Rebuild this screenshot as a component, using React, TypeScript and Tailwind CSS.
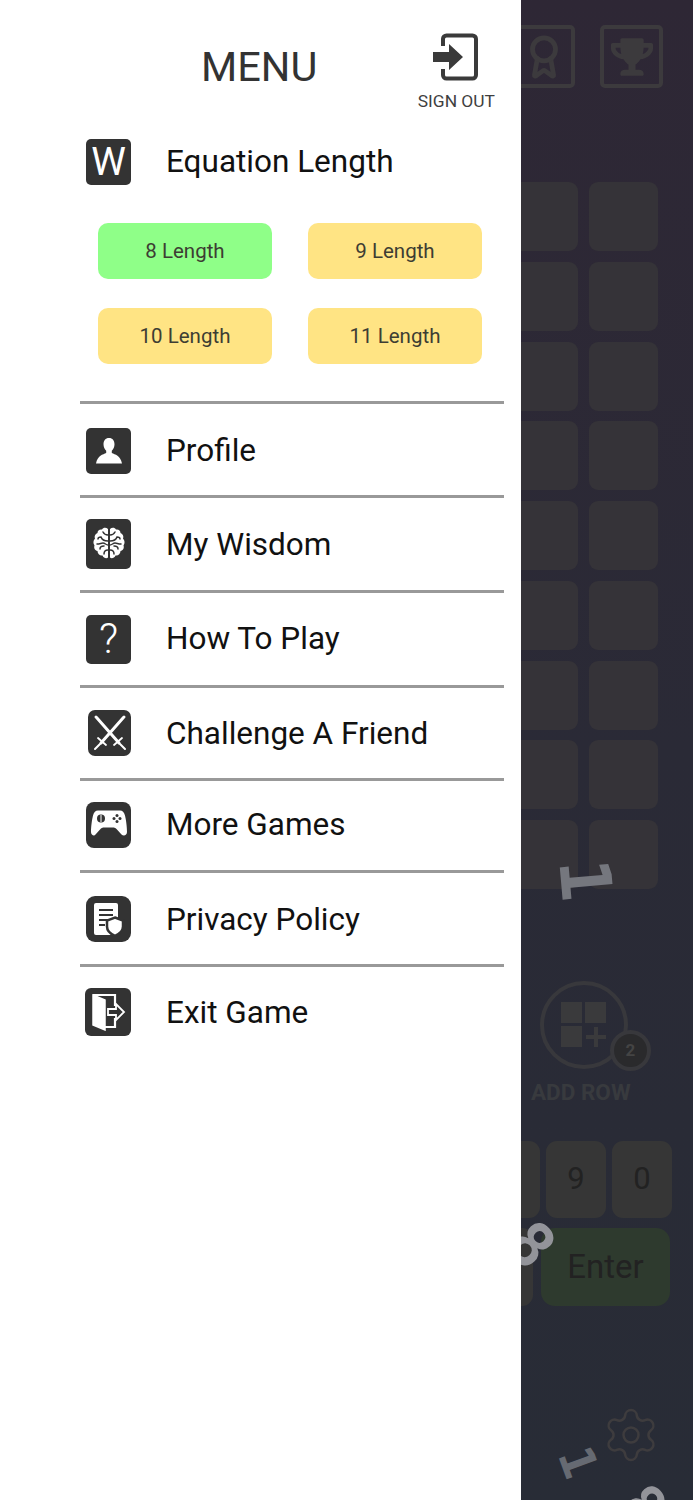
import React from "react";
import { FaTrophy } from "react-icons/fa";
import { Award, Settings } from "lucide-react";

const font = { fontFamily: "Roboto, sans-serif" };

function SignOutIcon() {
  return (
    <svg width="46" height="48" viewBox="0 0 46 48" fill="none">
      <path d="M10 13V6a3.500 3.500 0 0 1 3.500-3.500h26A3.500 3.500 0 0 1 43 6v36a3.500 3.500 0 0 1-3.500 3.500h-26A3.500 3.500 0 0 1 10 42v-6" stroke="#3a3a3a" strokeWidth="4" />
      <path d="M0 19h16v-8l14 13-14 13v-8H0z" fill="#3a3a3a" />
    </svg>
  );
}

function IconBox({ children, className = "h-[46px] w-[45px] rounded-[5px]" }: { children: React.ReactNode; className?: string }) {
  return (
    <div className={`flex shrink-0 items-center justify-center bg-[#333333] text-white ${className}`}>
      {children}
    </div>
  );
}

function ProfileIcon() {
  return (
    <svg width="30" height="30" viewBox="0 0 30 30" fill="#fff">
      <path d="M15 2c-3.600 0-5.500 2.600-5.500 6.200 0 2.800 1.200 5.300 2.700 6.500v2.300C9 18.500 3.500 19.500 2 27.500h26c-1.500-8-7-9-10.200-10.500v-2.300c1.500-1.200 2.700-3.700 2.700-6.500C20.500 4.600 18.600 2 15 2z" />
    </svg>
  );
}

function BrainIcon() {
  return (
    <svg width="34" height="36" viewBox="0 0 34 36" fill="none">
      <path d="M16 3c-2-2-5-1.500-6 .5-2.500-.5-4.500 1-4.500 3.500C3 8 2 10.500 3 12.500 1 14.500 1 17.500 2.500 19.500 1.500 22 3 24.500 5.500 25c0 3 2.500 5 5 4.500 1 2.500 4 3.500 5.500 2z" fill="#fff" />
      <path d="M18 3c2-2 5-1.500 6 .5 2.500-.5 4.500 1 4.500 3.500C31 8 32 10.500 31 12.500c2 2 2 5 .5 7 1 2.500-.5 5-3 5.500 0 3-2.500 5-5 4.500-1 2.500-4 3.500-5.500 2z" fill="#fff" />
      <path d="M16 9c-3 0-4-1-5-3M16 15c-3 0-6-1-7-4-2 0-3 1-3 2M5 18c3 0 4-1 6-1 2 0 3 2 5 2M8 23c0-2 2-3 4-3M12 28c0-3 1-4 4-4" stroke="#333" strokeWidth="1.500" strokeLinecap="round" />
      <path d="M18 9c3 0 4-1 5-3M18 15c3 0 6-1 7-4 2 0 3 1 3 2M29 18c-3 0-4-1-6-1-2 0-3 2-5 2M26 23c0-2-2-3-4-3M22 28c0-3-1-4-4-4" stroke="#333" strokeWidth="1.500" strokeLinecap="round" />
    </svg>
  );
}

function SwordsIcon() {
  return (
    <svg width="38" height="38" viewBox="0 0 38 38" fill="none" stroke="#fff" strokeLinecap="round">
      <path d="M5 3l1 1 22 25" strokeWidth="3" />
      <path d="M33 3l-1 1L10 29" strokeWidth="3" />
      <path d="M23 31l8-7M15 31l-8-7" strokeWidth="1.800" />
      <path d="M29 30l5 5M9 30l-5 5" strokeWidth="2" />
    </svg>
  );
}

function GamepadIcon() {
  return (
    <svg width="38" height="32" viewBox="0 0 38 32">
      <path d="M8 1.500h22c2.500 0 4 1.500 5 5 1 4 2 11 2 16.500 0 3.500-3.500 4.500-5.500 2.500l-5-5.500c-1-1-2-1.500-3.500-1.500h-9c-1.500 0-2.500.5-3.500 1.500l-5 5.500C4.500 27.500 1 26.500 1 23c0-5.500 1-12.500 2-16.500 1-3.500 2.500-5 5-5z" fill="#fff" />
      <circle cx="11" cy="9.500" r="4" fill="#333" />
      <path d="M11 6v7" stroke="#fff" strokeWidth="1" />
      <circle cx="27" cy="6.500" r="1.500" fill="#333" />
      <circle cx="27" cy="12.500" r="1.500" fill="#333" />
      <circle cx="24" cy="9.500" r="1.500" fill="#333" />
      <circle cx="30" cy="9.500" r="1.500" fill="#333" />
    </svg>
  );
}

function PolicyIcon() {
  return (
    <svg width="34" height="36" viewBox="0 0 34 36">
      <path d="M4 2h20a2 2 0 0 1 2 2v28a2 2 0 0 1-2 2H4a2 2 0 0 1-2-2V4a2 2 0 0 1 2-2z" fill="#fff" />
      <path d="M7 9h14M7 14h14M7 19h9M7 24h6" stroke="#333" strokeWidth="2" />
      <path d="M23 16.500l8 3v6c0 4.500-3.500 7.500-8 9.500-4.500-2-8-5-8-9.500v-6z" fill="#fff" stroke="#333" strokeWidth="2.500" />
    </svg>
  );
}

function ExitIcon() {
  return (
    <svg width="36" height="38" viewBox="0 0 36 38" fill="none">
      <path d="M3 2h22v11M25 25v9H14" stroke="#fff" strokeWidth="2.200" />
      <path d="M3 2l12 5v30L3 32z" fill="#fff" stroke="#fff" strokeWidth="1.500" />
      <path d="M18 16h8v-5l8 8-8 8v-5h-8z" stroke="#fff" strokeWidth="1.800" />
    </svg>
  );
}

const rows: { label: string; icon: React.ReactNode; h: string; box?: string; text: string }[] = [
  { label: "Profile", icon: <ProfileIcon />, h: "h-[94px]", box: "mt-[2px] h-[46px] w-[45px] rounded-[5px]", text: "pt-[2px]" },
  { label: "My Wisdom", icon: <BrainIcon />, h: "h-[95px]", box: "h-[50px] w-[45px] rounded-[5px]", text: "pt-[2px]" },
  { label: "How To Play", icon: <span className="text-[42px] font-light leading-none">?</span>, h: "h-[95px]", box: "h-[49px] w-[45px] rounded-[5px]", text: "" },
  { label: "Challenge A Friend", icon: <SwordsIcon />, h: "h-[93px]", box: "ml-[2px] h-[46px] w-[43px] rounded-[7px]", text: "pt-[2px] ml-[-2px]" },
  { label: "More Games", icon: <GamepadIcon />, h: "h-[92px]", box: "mb-[2px] h-[46px] w-[45px] rounded-[8px]", text: "pb-[2px]" },
  { label: "Privacy Policy", icon: <PolicyIcon />, h: "h-[94px]", box: "h-[46px] w-[45px] rounded-[9px]", text: "pt-[2px]" },
  { label: "Exit Game", icon: <ExitIcon />, h: "h-[92px]", box: "ml-[-1px] h-[48px] w-[46px] rounded-[6px]", text: "pt-[2px]" },
];

function LengthBtn({ label, active }: { label: string; active?: boolean }) {
  return (
    <div className={`flex h-[56px] w-[174px] items-center justify-center rounded-[10px] text-[20.500px] text-[#3d3d33] ${active ? "bg-[#8fff88]" : "bg-[#ffe484]"}`}>
      {label}
    </div>
  );
}

function Tile() {
  return <div className="h-[69px] w-[69px] rounded-[9px] bg-[#353338]" />;
}

function Key({ label }: { label: string }) {
  return (
    <div className="flex h-[77px] w-[60px] shrink-0 items-center justify-center rounded-[11px] bg-[#363636] text-[31px] text-[#222]">
      {label}
    </div>
  );
}

const digit = "absolute font-bold leading-none [font-family:'DejaVu_Sans_Mono',monospace]";

function Game() {
  return (
    <div className="relative h-full flex-1 overflow-hidden bg-gradient-to-b from-[#2e2735] via-[#2a2a36] to-[#282c36]">
      <div className="ml-[-9px] mt-[25px] flex gap-[25px]">
        <div className="flex h-[63px] w-[63px] shrink-0 items-center justify-center rounded-[5px] border-[4px] border-[#3c3a3d] text-[#3c3a3d]">
          <Award size={46} strokeWidth={2.500} />
        </div>
        <div className="flex h-[63px] w-[63px] shrink-0 items-center justify-center rounded-[5px] border-[4px] border-[#3c3a3d] text-[#3c3a3d]">
          <FaTrophy size={42} />
        </div>
      </div>
      <div className="ml-[-12px] mt-[94px] grid grid-cols-[69px_69px] gap-x-[11px] gap-y-[10.750px]">
        {Array.from({ length: 18 }).map((_, i) => (
          <Tile key={i} />
        ))}
      </div>
      <div className="ml-[19px] mt-[92px] flex w-[120px] flex-col items-start">
        <div className="relative h-[88px] w-[88px] rounded-full border-[4px] border-[#38383c]">
          <div className="absolute left-[17px] top-[17px] grid grid-cols-2 gap-[3px]">
            <div className="h-[21px] w-[21px] bg-[#3a3a3c]" />
            <div className="h-[21px] w-[21px] bg-[#3a3a3c]" />
            <div className="h-[21px] w-[21px] bg-[#3a3a3c]" />
            <div className="relative h-[21px] w-[21px]">
              <div className="absolute left-[9px] top-[1px] h-[20px] w-[4px] bg-[#3a3a3c]" />
              <div className="absolute left-[1px] top-[9px] h-[4px] w-[20px] bg-[#3a3a3c]" />
            </div>
          </div>
          <div className="absolute left-[66px] top-[45px] flex h-[41px] w-[41px] items-center justify-center rounded-full border-[4px] border-[#38383c] bg-[#2a2a2c] text-[17px] font-bold text-[#444]">
            2
          </div>
        </div>
        <div className="ml-[-9px] mt-[11px] whitespace-nowrap text-[22.500px] font-bold leading-[25px] text-[#383a3e]">ADD ROW</div>
      </div>
      <div className="ml-[-41px] mt-[36px] flex gap-[6px]">
        <Key label="8" />
        <Key label="9" />
        <Key label="0" />
      </div>
      <div className="ml-[-48px] mt-[10px] flex gap-[8px]">
        <div className="h-[78px] w-[60px] shrink-0 rounded-[11px] bg-[#363636]" />
        <div className="flex h-[78px] w-[129px] shrink-0 items-center justify-center rounded-[14px] bg-[#2e3a2e] text-[33px] text-[#222]">
          Enter
        </div>
      </div>
      <div className="absolute left-[80px] top-[1405px] text-[#3e3c3e]">
        <Settings size={60} strokeWidth={1} />
      </div>
      <div className={`${digit} left-[43px] top-[845px] rotate-[85deg] text-[70px] text-[#75777e]`}>1</div>
      <div className={`${digit} left-[-9px] top-[1214px] rotate-[48deg] text-[62px] text-[#93949a]`}>8</div>
      <div className={`${digit} left-[43px] top-[1438px] rotate-[70deg] text-[48px] text-[#666a72]`}>1</div>
      <div className={`${digit} left-[106px] top-[1478px] rotate-[48deg] text-[56px] text-[#93949a]`}>8</div>
    </div>
  );
}

export default function App() {
  return (
    <div className="flex h-[1500px] w-[693px] overflow-hidden bg-white" style={font}>
      <div className="h-full w-[521px] shrink-0 bg-white">
        <div className="flex h-[116px] items-start pl-[80px] pr-[26px]">
          <div className="flex-1 pl-[121px] pt-[43px] text-[41.500px] leading-[48px] text-[#333]">MENU</div>
          <div className="flex flex-col items-center pt-[33px]">
            <SignOutIcon />
            <div className="mt-[11px] whitespace-nowrap text-[17.400px] leading-[19px] text-[#3f3f3f]">SIGN OUT</div>
          </div>
        </div>
        <div className="flex h-[92px] items-center pl-[86px]">
          <IconBox><span className="text-[39px] leading-none">W</span></IconBox>
          <span className="ml-[35px] text-[31.500px] text-[#111]">Equation Length</span>
        </div>
        <div className="ml-[98px] mt-[15px] grid w-[384px] grid-cols-2 gap-x-[36px] gap-y-[29px]">
          <LengthBtn label="8 Length" active />
          <LengthBtn label="9 Length" />
          <LengthBtn label="10 Length" />
          <LengthBtn label="11 Length" />
        </div>
        <div className="ml-[80px] mt-[37px] w-[424px]">
          {rows.map((r) => (
            <div key={r.label} className={`flex items-center border-t-[3px] border-[#999999] pl-[6px] ${r.h}`}>
              <IconBox className={r.box}>{r.icon}</IconBox>
              <span className={`ml-[35px] text-[31.500px] text-[#111] ${r.text}`}>{r.label}</span>
            </div>
          ))}
        </div>
      </div>
      <Game />
    </div>
  );
}
